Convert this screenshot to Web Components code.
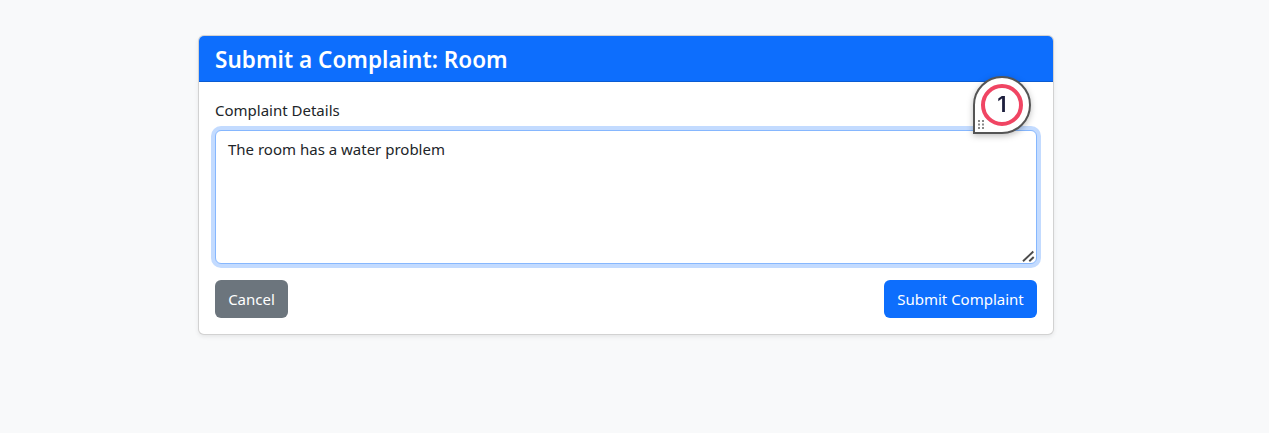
<!DOCTYPE html>
<html lang="en">
<head>
<meta charset="utf-8">
<title>Submit a Complaint</title>
<style>
body{margin:0;background:#f8f9fa;color:#212529;font:15px/24px "Noto Sans","Open Sans",sans-serif}
</style>
</head>
<body>
<complaint-page></complaint-page>
<script>
const define=(name,html)=>customElements.define(name,class extends HTMLElement{
  constructor(){super();this.attachShadow({mode:"open"}).innerHTML=html;}
});
define("complaint-card",`<style>
:host{display:block;box-sizing:border-box;width:856px;height:300px;border:1px solid rgba(0,0,0,.175);border-radius:6px;background:#fff;box-shadow:0 2px 4px rgba(0,0,0,.075)}
header{box-sizing:border-box;height:46px;padding:9px 16px 7px;background:#0d6efd;border-bottom:1px solid #0b5bd1;border-radius:5px 5px 0 0;color:#fff}
h4{margin:0;font-size:22.5px;line-height:29px;font-weight:600;letter-spacing:.03px}
.body{padding:16px}
</style><header><h4><slot name="title"></slot></h4></header><div class="body"><slot></slot></div>`);
define("complaint-field",`<style>
:host{display:block;margin-bottom:16px}
.label{margin-bottom:8px}
.box{position:relative;box-sizing:border-box;height:134px;padding:6px 12px;border:1px solid #86b7fe;border-radius:6px;background:#fff;box-shadow:0 0 0 4px #c3dbff}
svg{position:absolute;right:1px;bottom:0;display:block}
</style><div class="label"><slot name="label"></slot></div><div class="box"><slot></slot>
<svg width="13" height="13" viewBox="0 0 13 13" fill="none" stroke="#4c4c4c" stroke-width="1.9"><path d="M1 11.3 11.3 1.5M7.3 11.3 11.7 7"/></svg></div>`);
define("action-button",`<style>
:host{display:block;box-sizing:border-box;height:38px;padding:7px 0;border-radius:6px;text-align:center;color:#fff;background:#0d6efd;width:153px}
:host([kind="secondary"]){background:#6c757d;width:73px}
</style><slot></slot>`);
define("step-marker",`<style>
:host{display:block;width:58px;height:58px;filter:drop-shadow(0 2px 3px rgba(0,0,0,.25))}
.pin{position:relative;display:grid;place-items:center;box-sizing:border-box;width:58px;height:58px;border:2px solid #555;border-radius:50% 50% 50% 0;background:#fff}
.ring{display:grid;place-items:center;box-sizing:border-box;width:42px;height:42px;border:4px solid #f04563;border-radius:50%;color:#1d1f3d;font:600 22px/32px Inter,sans-serif}
.ring span{display:block;margin-top:-2px}
svg{position:absolute;left:2px;bottom:2px}
</style><div class="pin"><div class="ring"><span><slot></slot></span></div>
<svg width="8" height="11" viewBox="0 0 8 11" fill="#8a8a8a"><path d="M1 1h2v2H1zM5 1h2v2H5zM1 4.5h2v2H1zM5 4.5h2v2H5zM1 8h2v2H1zM5 8h2v2H5z"/></svg></div>`);
define("complaint-page",`<style>
:host{display:block;position:relative;box-sizing:border-box;width:1269px;height:433px;padding:35px 0 0 198px;overflow:hidden}
.actions{display:flex;justify-content:space-between}
step-marker{position:absolute;left:973px;top:76px}
</style>
<complaint-card><span slot="title">Submit a Complaint: Room</span>
<complaint-field><span slot="label">Complaint Details</span>The room has a water problem</complaint-field>
<div class="actions"><action-button kind="secondary">Cancel</action-button><action-button>Submit Complaint</action-button></div>
</complaint-card><step-marker>1</step-marker>`);
</script>
</body>
</html>
